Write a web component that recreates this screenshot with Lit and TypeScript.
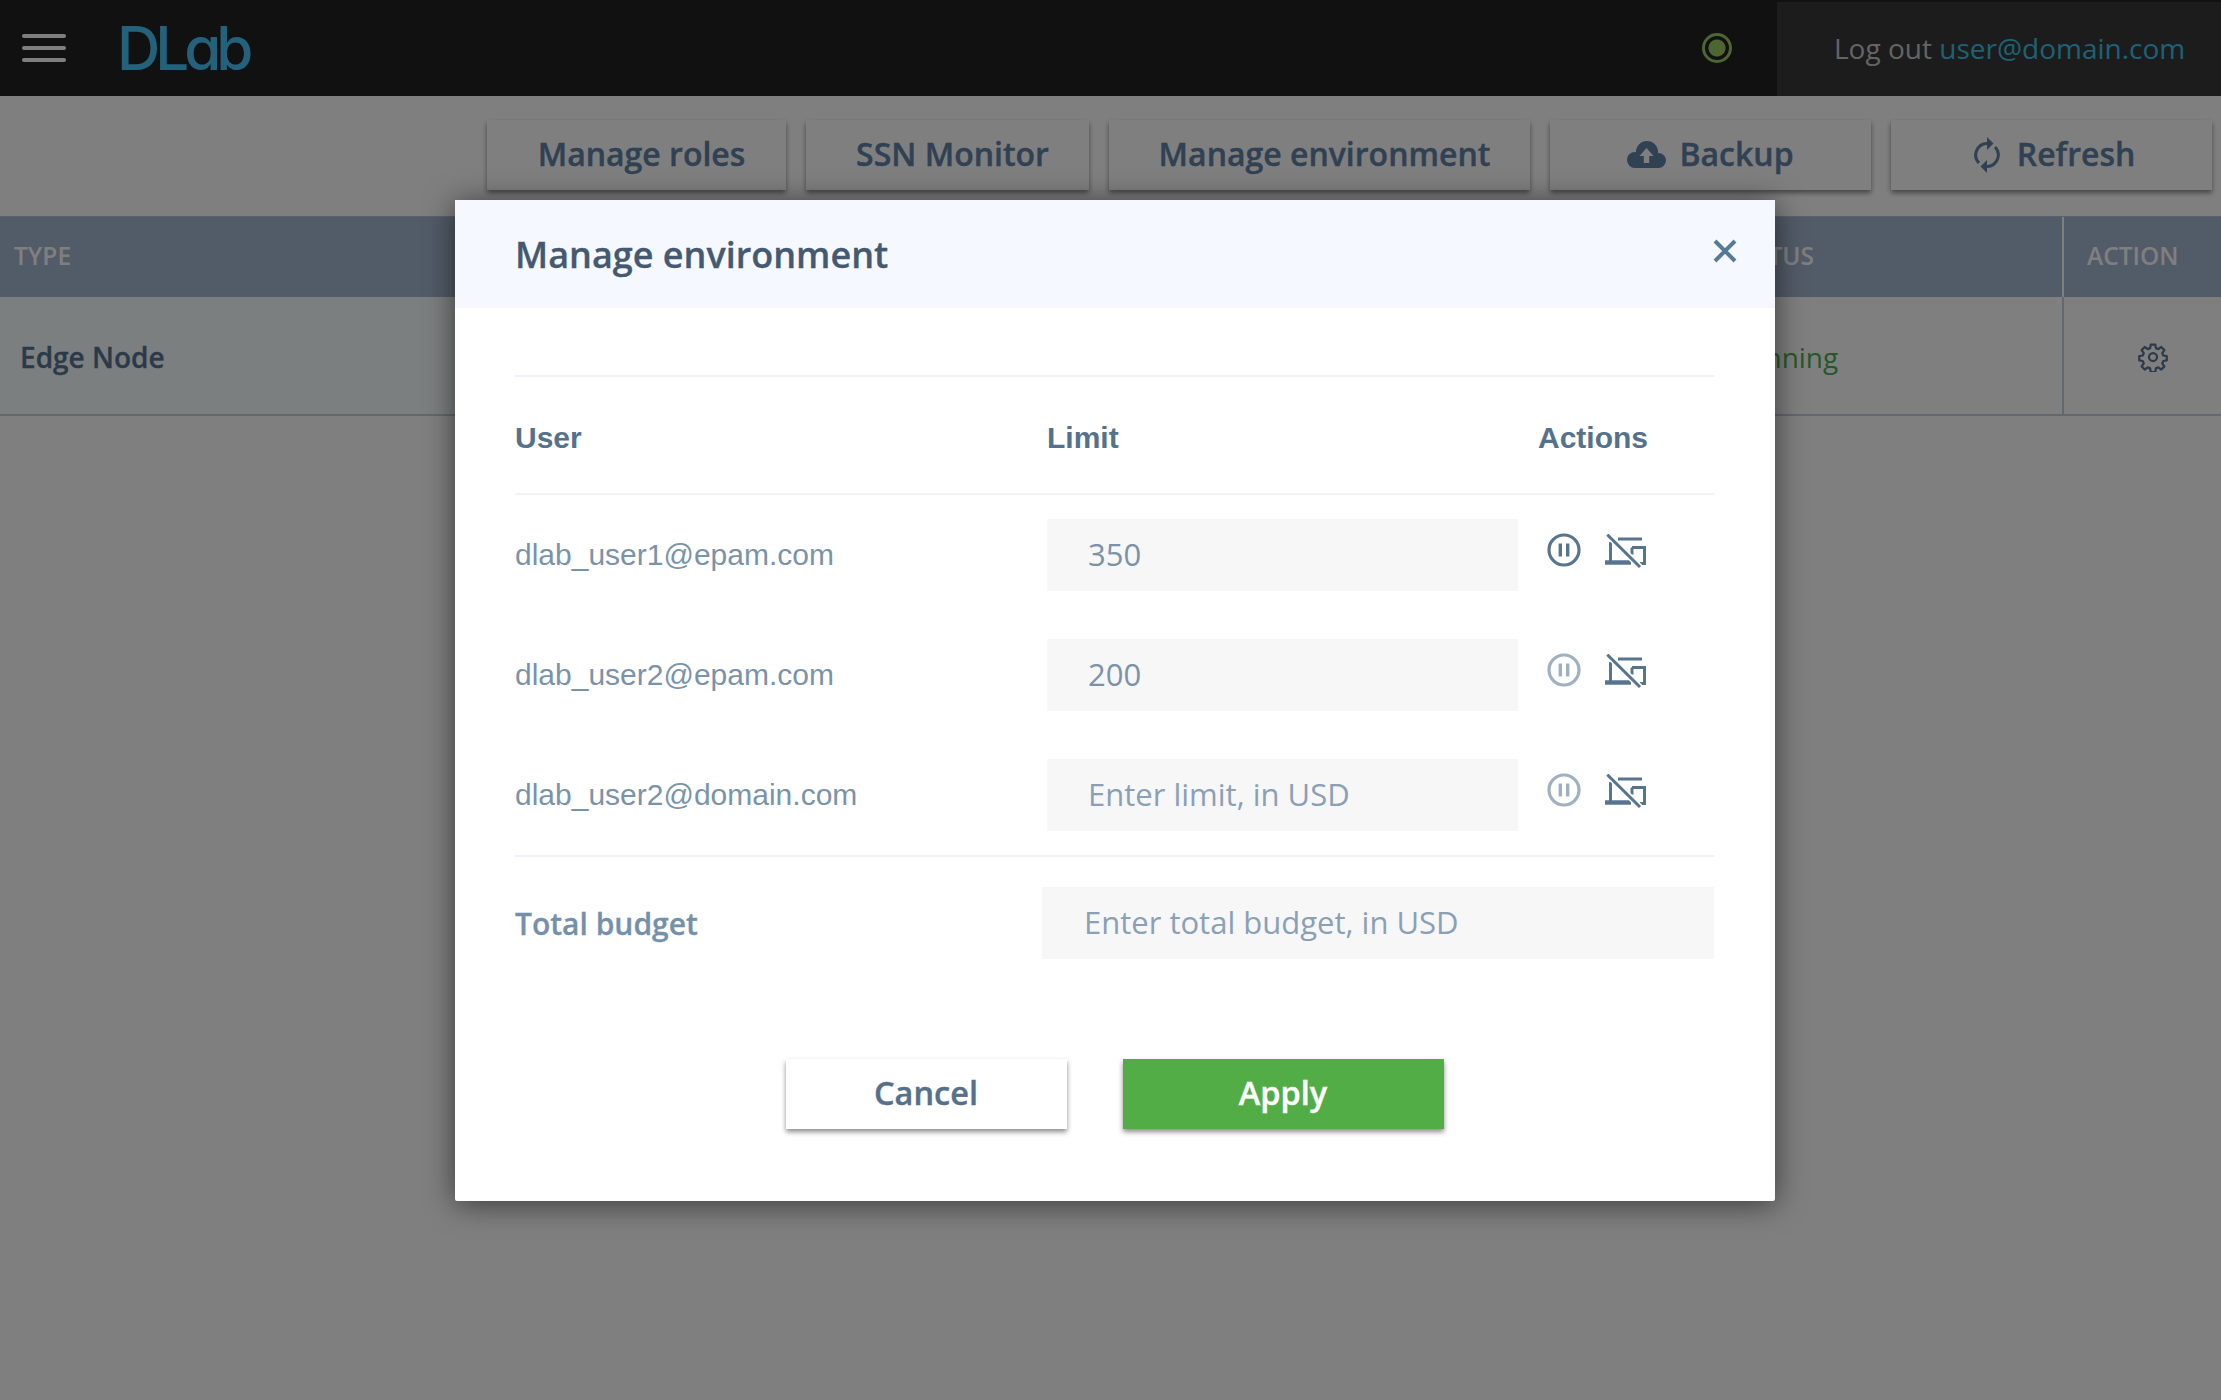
import { LitElement, css, html, svg } from 'lit';
import { customElement } from 'lit/decorators.js';

const cloudIcon = svg`<svg class="cloud" viewBox="0 0 39 27"><g fill="currentColor"><circle cx="8" cy="19" r="8"/><circle cx="20" cy="11" r="11"/><circle cx="31.500" cy="19.500" r="7.500"/><rect x="8" y="14" width="23" height="13"/></g><path d="M19.500 7l7 8h-4.300v7h-5.400v-7h-4.300z" fill="#fff"/></svg>`;

const refreshIcon = svg`<svg class="refresh" viewBox="0 0 28 36" fill="none" stroke="currentColor" stroke-width="3"><path d="M14 6.500A11.500 11.500 0 0 0 6 26"/><path d="M14 29.500A11.500 11.500 0 0 0 22 10"/><path d="M14 0l6.500 6.500-6.500 6.500z" fill="currentColor" stroke="none"/><path d="M14 23l-6.500 6.500 6.500 6.500z" fill="currentColor" stroke="none"/></svg>`;

const gearIcon = svg`<svg class="gear" viewBox="0 0 24 24" fill="none" stroke="currentColor" stroke-width="1.800" stroke-linejoin="round"><circle cx="12" cy="12" r="3.200"/><path d="M10.200 2h3.600l.5 2.900 1.900.8 2.400-1.700 2.500 2.500-1.700 2.400.8 1.900 2.800.5v3.400l-2.800.5-.8 1.900 1.700 2.400-2.500 2.500-2.400-1.700-1.900.8-.5 2.900h-3.600l-.5-2.900-1.900-.8-2.400 1.700-2.500-2.500 1.700-2.400-.8-1.900-2.800-.5v-3.400l2.800-.5.8-1.900-1.700-2.400 2.500-2.500 2.400 1.700 1.900-.8z"/></svg>`;

const pauseIcon = svg`<svg class="pause" viewBox="0 0 34 34" fill="none" stroke="currentColor"><circle cx="17" cy="17" r="15" stroke-width="3.200"/><path d="M13.300 10.500v13M20.700 10.500v13" stroke-width="3.400"/></svg>`;

const devicesOffIcon = svg`<svg class="devices" viewBox="0 0 41 34" fill="none" stroke="currentColor" stroke-width="3"><path d="M13 5h24M5.500 8v20"/><path d="M0 28.500h26" stroke-width="4.500"/><path d="M27 13.500h12.500v16h-5"/><path d="M27 13.500v7"/><path d="M2.300.7l32.700 32.300" stroke="#fff" stroke-width="6"/><path d="M2.300.7l32.700 32.300"/></svg>`;

const rows = [
  { email: 'dlab_user1@epam.com', value: '350', active: true },
  { email: 'dlab_user2@epam.com', value: '200', active: false },
  { email: 'dlab_user2@domain.com', value: '', active: false },
];

@customElement('app-root')
export class AppRoot extends LitElement {
  static styles = css`
    :host {
      display: block;
      position: relative;
      height: 1400px;
      overflow: hidden;
      background: #fff;
      font-family: 'Open Sans', sans-serif;
      color: #688cb4;
    }

    .topbar {
      display: flex;
      height: 96px;
      background: #222;
      align-items: stretch;
    }

    .burger {
      display: flex;
      flex-direction: column;
      justify-content: center;
      gap: 8px;
      width: 44px;
      margin-left: 22px;
    }

    .burger span {
      height: 4px;
      border-radius: 2px;
      background: #fff;
    }

    .logo {
      margin-left: 51px;
      font-family: Inter, sans-serif;
      font-feature-settings: 'cv11';
      font-size: 60px;
      font-weight: 500;
      letter-spacing: -5px;
      line-height: 96px;
      color: #46c4f4;
    }

    .status-dot {
      margin-left: auto;
      align-self: center;
      box-sizing: border-box;
      width: 30px;
      height: 30px;
      margin-right: 45px;
      border: 3px solid #9ccc65;
      border-radius: 50%;
      background: radial-gradient(circle, #9ccc65 0 8px, transparent 9px);
    }

    .user-box {
      display: flex;
      align-items: center;
      box-sizing: border-box;
      width: 444px;
      margin-top: 2px;
      padding: 0 0 3px 57px;
      background: #383838;
      font-size: 28px;
      color: #c8c8c8;
      white-space: pre;
    }

    .user-box a {
      color: #3fc0ea;
    }

    .toolbar {
      display: flex;
      justify-content: flex-end;
      gap: 20px;
      padding: 24px 9px 0 0;
      height: 96px;
      box-sizing: border-box;
    }

    .tool {
      display: flex;
      align-items: center;
      justify-content: center;
      gap: 13px;
      box-sizing: border-box;
      height: 70px;
      border: 0;
      padding: 0 0 4px;
      background: #fff;
      box-shadow: 0 3px 5px rgba(0, 0, 0, 0.45);
      font: 600 32px 'Open Sans', sans-serif;
      -webkit-text-stroke: 0.4px currentColor;
      color: #5f82a6;
    }

    .tool.plain {
      padding-left: 10px;
    }

    .tool.with-refresh {
      padding-left: 5px;
    }

    .cloud {
      width: 39px;
      height: 27px;
      margin-top: 3px;
    }

    .refresh {
      width: 28px;
      height: 36px;
      margin: 4px 3px 0 0;
    }

    .table-head,
    .table-row {
      display: grid;
      grid-template-columns: 1711px 351px 1fr;
    }

    .table-head {
      height: 81px;
      margin-top: 24px;
      background: #a4b6d0;
      font-size: 24.500px;
      font-weight: 600;
      color: #fff;
      align-items: center;
      border-top: 1px solid #b6c3d6;
      box-sizing: border-box;
    }

    .table-head div {
      height: 100%;
      display: flex;
      align-items: center;
      padding: 0 0 4px 14px;
      box-sizing: border-box;
    }

    .table-head .action {
      border-left: 2px solid #fff;
      padding-left: 23px;
    }

    .table-row {
      height: 119px;
      align-items: stretch;
      background: #fff;
      border-bottom: 2px solid #c7d0dc;
      box-sizing: border-box;
      font-size: 28px;
    }

    .table-row > div {
      display: flex;
      align-items: center;
      padding: 2px 0 0 20px;
      box-sizing: border-box;
    }

    .table-row .type {
      font-weight: 600;
      -webkit-text-stroke: 0.3px currentColor;
      color: #567392;
      background: #f8ffff;
    }

    .table-row .running {
      color: #4caf50;
      padding-left: 19px;
    }

    .table-row .action {
      border-left: 2px solid #c7d0dc;
      justify-content: center;
      padding: 2px 0 0 20px;
      color: #5b7590;
    }

    .gear {
      width: 30px;
      height: 30px;
    }

    .backdrop {
      position: absolute;
      inset: 0;
      background: rgba(0, 0, 0, 0.5);
    }

    .modal {
      position: absolute;
      left: 455px;
      top: 200px;
      width: 1320px;
      height: 1001px;
      background: #fff;
      box-shadow: 0 3px 30px rgba(0, 0, 0, 0.55);
      border-radius: 2px;
    }

    .modal-head {
      display: flex;
      justify-content: space-between;
      align-items: center;
      height: 108px;
      padding: 0 38px 0 60px;
      background: #f5f8fe;
    }

    .modal-head h2 {
      margin: 0;
      font-size: 36px;
      font-weight: 600;
      -webkit-text-stroke: 0.3px currentColor;
      color: #455a70;
    }

    .close {
      width: 24px;
      height: 24px;
      margin-top: -6px;
      color: #577a96;
    }

    .modal-body {
      padding: 67px 61px 0 60px;
    }

    .grid {
      display: grid;
      grid-template-columns: 532px 491px 1fr;
      border-top: 2px solid #eff3f8;
      border-bottom: 2px solid #eff3f8;
      padding-bottom: 24px;
    }

    .grid-head {
      display: flex;
      align-items: center;
      box-sizing: border-box;
      height: 118px;
      padding-top: 5px;
      border-bottom: 2px solid #eff3f8;
      margin-bottom: 24px;
      font: 700 30px 'Liberation Sans', sans-serif;
      color: #56718b;
    }

    .email {
      display: flex;
      align-items: center;
      height: 72px;
      margin-bottom: 48px;
      font: 400 30px 'Liberation Sans', sans-serif;
      color: #7a93a9;
    }

    .grid > .email:nth-last-child(-n + 3),
    .grid > .field:nth-last-child(-n + 3),
    .grid > .actions:nth-last-child(-n + 3) {
      margin-bottom: 0;
    }

    input {
      display: block;
      box-sizing: border-box;
      width: 100%;
      height: 72px;
      border: 0;
      outline: 0;
      background: #f7f7f7;
      font: 400 31px 'Open Sans', sans-serif;
      color: #7b92a9;
      padding: 0 41px 2px;
    }

    input::placeholder {
      color: #8aa0b6;
      opacity: 1;
    }

    .field {
      margin-right: 20px;
      margin-bottom: 48px;
    }

    .actions {
      display: flex;
      gap: 24px;
      padding: 14px 0 0 9px;
      align-items: flex-start;
      color: #58758f;
    }

    .pause {
      width: 34px;
      height: 34px;
    }

    .pause.dim {
      color: #9fb0c0;
    }

    .devices {
      width: 41px;
      height: 34px;
      margin-top: 1px;
    }

    .total {
      display: flex;
      align-items: center;
      margin-top: 30px;
    }

    .total label {
      width: 527px;
      font-size: 30px;
      font-weight: 600;
      -webkit-text-stroke: 0.3px currentColor;
      color: #7590ab;
    }

    .total input {
      flex: 1;
      padding: 0 42px 2px;
    }

    .buttons {
      display: flex;
      justify-content: center;
      gap: 56px;
      margin-top: 100px;
    }

    .btn {
      width: 281px;
      height: 70px;
      border: 0;
      padding: 0 0 4px;
      background: #fff;
      box-shadow: 0 3px 5px rgba(0, 0, 0, 0.45);
      font: 600 32.500px 'Open Sans', sans-serif;
      -webkit-text-stroke: 0.4px currentColor;
      color: #567089;
    }

    .btn.apply {
      width: 321px;
      background: #53ad46;
      color: #fff;
    }
  `;

  render() {
    return html`
      <div class="topbar">
        <div class="burger"><span></span><span></span><span></span></div>
        <div class="logo">DLab</div>
        <div class="status-dot"></div>
        <div class="user-box">Log out <a>user@domain.com</a></div>
      </div>

      <div class="toolbar">
        <button class="tool plain" style="width:299px">Manage roles</button>
        <button class="tool plain" style="width:283px">SSN Monitor</button>
        <button class="tool plain" style="width:421px">Manage environment</button>
        <button class="tool" style="width:321px">${cloudIcon}Backup</button>
        <button class="tool with-refresh" style="width:321px">${refreshIcon}Refresh</button>
      </div>

      <div class="table-head">
        <div>TYPE</div>
        <div>STATUS</div>
        <div class="action">ACTION</div>
      </div>
      <div class="table-row">
        <div class="type">Edge Node</div>
        <div class="running">Running</div>
        <div class="action">${gearIcon}</div>
      </div>

      <div class="backdrop"></div>

      <div class="modal">
        <div class="modal-head">
          <h2>Manage environment</h2>
          <svg class="close" viewBox="0 0 24 24" stroke="currentColor" stroke-width="4"><path d="M2 2l20 20M22 2L2 22"/></svg>
        </div>
        <div class="modal-body">
          <div class="grid">
            <div class="grid-head">User</div>
            <div class="grid-head">Limit</div>
            <div class="grid-head">Actions</div>
            ${rows.map(r => html`
              <div class="email">${r.email}</div>
              <div class="field">
                <input .value=${r.value} placeholder="Enter limit, in USD" />
              </div>
              <div class="actions">
                <span class="pause ${r.active ? '' : 'dim'}">${pauseIcon}</span>
                ${devicesOffIcon}
              </div>
            `)}
          </div>
          <div class="total">
            <label>Total budget</label>
            <input placeholder="Enter total budget, in USD" />
          </div>
          <div class="buttons">
            <button class="btn">Cancel</button>
            <button class="btn apply">Apply</button>
          </div>
        </div>
      </div>
    `;
  }
}
